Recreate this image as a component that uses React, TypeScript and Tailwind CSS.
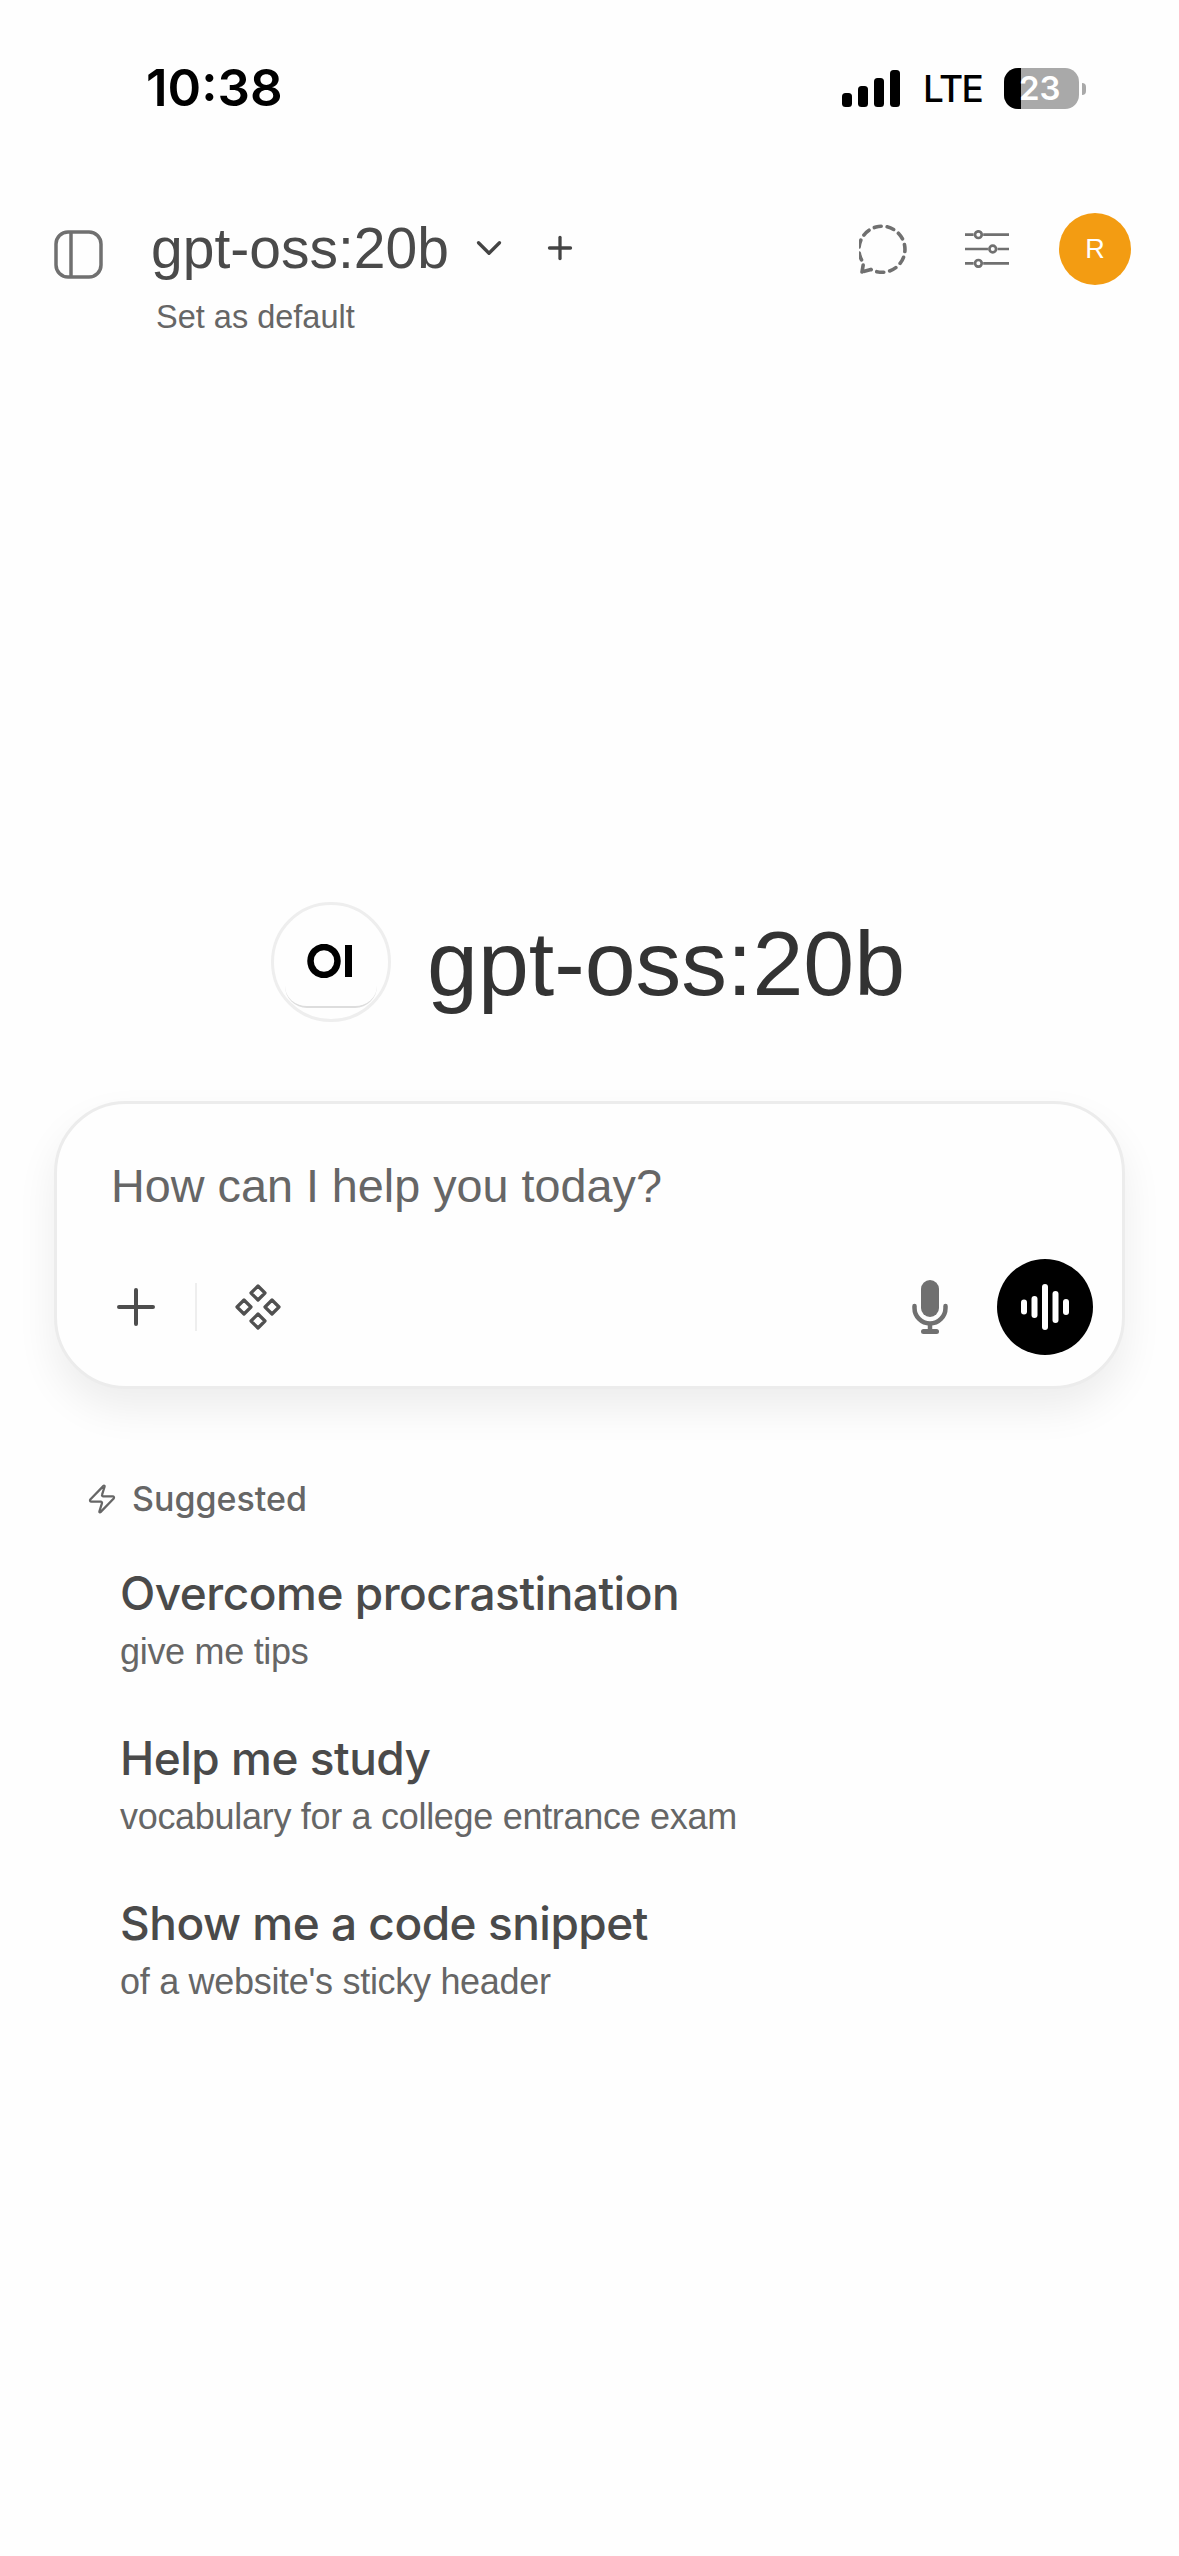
import { Plus, ChevronDown, Zap } from "lucide-react";

const suggestions = [
  { title: "Overcome procrastination", sub: "give me tips" },
  { title: "Help me study", sub: "vocabulary for a college entrance exam" },
  { title: "Show me a code snippet", sub: "of a website's sticky header" },
];

function StatusBar() {
  return (
    <div className="flex h-[213px] items-start justify-between pl-[146px] pr-[93px] pt-[58px]">
      <div className="font-['Inter',sans-serif] text-[51px] font-semibold leading-[60px] text-black">10:38</div>
      <div className="mt-[10px] flex items-center">
        <svg width="60" height="37" viewBox="0 0 58 37" fill="black">
          <rect x="0" y="23" width="10" height="14" rx="3.5" />
          <rect x="16" y="16" width="10" height="21" rx="3.5" />
          <rect x="32" y="8" width="10" height="29" rx="3.5" />
          <rect x="48" y="0" width="10" height="37" rx="3.5" />
        </svg>
        <div className="ml-[22px] w-[60px] font-['Inter',sans-serif] text-[37px] font-medium leading-[38px] tracking-[-1.5px] text-black">LTE</div>
        <div className="relative ml-[21px] h-[41px] w-[75px] overflow-hidden rounded-[14px] bg-[#a9a9a9]">
          <div className="h-full w-[17px] bg-black" />
          <div className="absolute left-[15px] top-0 font-['Inter',sans-serif] text-[33px] font-semibold leading-[41px] text-white">23</div>
        </div>
        <div className="ml-[3px] h-[12px] w-[4px] rounded-r-full bg-[#a9a9a9]" />
      </div>
    </div>
  );
}

function Header() {
  return (
    <div className="flex h-[120px] items-start pl-[54px] pr-[48px] pt-[17px]">
      <svg width="49" height="49" viewBox="0 0 49 49" fill="none" stroke="#707070" strokeWidth="3.5" className="mr-[48px]">
        <rect x="2" y="2" width="45" height="45" rx="12" />
        <path d="M17 2v45" />
      </svg>
      <div className="-mt-[7px]">
        <div className="flex items-center">
          <div className="font-['Liberation_Sans',sans-serif] text-[57px] leading-[50px] text-[#4a4a4a]">gpt-oss:20b</div>
          <ChevronDown className="ml-[19px]" size={42} strokeWidth={1.9} color="#444" />
          <Plus className="ml-[32px]" size={36} strokeWidth={2.2} color="#444" />
        </div>
        <div className="ml-[5px] mt-[26px] font-['Liberation_Sans',sans-serif] text-[32.500px] leading-[36px] text-[#666]">Set as default</div>
      </div>
      <div className="-mt-[17px] ml-auto flex items-center">
        <svg width="50" height="50" viewBox="0 0 50 50" fill="none" stroke="#707070" strokeWidth="3.6" strokeDasharray="7 6" strokeLinecap="round">
          <path d="M3 48l1.5-9A23 23 0 1 1 12 45.500z" />
        </svg>
        <svg width="44" height="38" viewBox="0 0 46 38" fill="none" stroke="#707070" strokeWidth="2.8" className="ml-[56px]">
          <path d="M0 4h9m10 0h27M0 19h24m10 0h12M0 34h9m10 0h27" />
          <circle cx="14" cy="4" r="3.500" />
          <circle cx="29" cy="19" r="3.500" />
          <circle cx="14" cy="34" r="3.500" />
        </svg>
        <div className="ml-[50px] flex h-[72px] w-[72px] items-center justify-center rounded-full bg-[#f39c12] font-['Liberation_Sans',sans-serif] text-[27px] text-white">R</div>
      </div>
    </div>
  );
}

function Hero() {
  return (
    <div className="mt-[569px] flex items-center pl-[271px]">
      <div className="flex h-[120px] w-[120px] items-center justify-center rounded-full border-[3px] border-[#eeeeee]">
        <div className="flex h-[92px] w-[92px] items-center justify-center rounded-[22px] border-b-2 border-[#dddddd] pr-[3px]">
          <svg width="46" height="34" viewBox="0 0 46 34">
            <ellipse cx="17" cy="17" rx="13.500" ry="14" fill="none" stroke="black" strokeWidth="6.500" />
            <rect x="38" y="1" width="7" height="32" fill="black" />
          </svg>
        </div>
      </div>
      <div className="ml-[36px] mt-[2px] font-['Liberation_Sans',sans-serif] text-[91.500px] leading-[100px] text-[#333333]">gpt-oss:20b</div>
    </div>
  );
}

function Composer() {
  return (
    <div className="mx-[54px] mt-[79px] h-[288px] rounded-[72px] border-[3px] border-[#ececec] bg-[#fefefe] shadow-[0_20px_40px_rgba(0,0,0,0.07)]">
      <div className="pl-[54px] pt-[54px] font-['Liberation_Sans',sans-serif] text-[46.750px] leading-[56px] text-[#666666]">How can I help you today?</div>
      <div className="mt-[45px] flex items-center pl-[60px] pr-[29px]">
        <svg width="38" height="38" viewBox="0 0 38 38" stroke="#4d4d4d" strokeWidth="4" strokeLinecap="round">
          <path d="M19 2v34M2 19h34" />
        </svg>
        <div className="ml-[40px] h-[48px] w-[2px] bg-[#eeeeee]" />
        <svg width="48" height="48" viewBox="0 0 48 48" fill="none" stroke="#505050" strokeWidth="3.200" strokeLinejoin="round" className="ml-[37px]">
          <path d="M24 3l7 7-7 7-7-7zM24 31l7 7-7 7-7-7zM10 17l7 7-7 7-7-7zM38 17l7 7-7 7-7-7z" />
        </svg>
        <svg width="36" height="54" viewBox="0 0 36 54" fill="none" className="ml-auto">
          <rect x="9" y="0" width="18" height="37" rx="9" fill="#707070" />
          <path d="M2.500 26v2a15.500 15.500 0 0 0 31 0v-2" stroke="#707070" strokeWidth="4.500" strokeLinecap="round" />
          <path d="M18 44v6" stroke="#707070" strokeWidth="4.500" />
          <rect x="9" y="49" width="18" height="5" rx="2.500" fill="#707070" />
        </svg>
        <div className="ml-[49px] flex h-[96px] w-[96px] items-center justify-center rounded-full bg-black">
          <svg width="48" height="46" viewBox="0 0 48 46" fill="white">
            <rect x="0" y="15.500" width="6" height="15" rx="3" />
            <rect x="10.500" y="12" width="6" height="22" rx="3" />
            <rect x="21" y="0" width="6" height="46" rx="3" />
            <rect x="31.500" y="7" width="6" height="32" rx="3" />
            <rect x="42" y="15" width="6" height="16" rx="3" />
          </svg>
        </div>
      </div>
    </div>
  );
}

function Suggested() {
  return (
    <div className="mt-[88px] pl-[86px]">
      <div className="flex items-center">
        <Zap size={32} strokeWidth={1.7} color="#666666" />
        <div className="ml-[14px] font-['Inter',sans-serif] text-[34px] font-medium leading-[44px] text-[#666666]">Suggested</div>
      </div>
      <div className="mt-[42px] flex flex-col gap-[48px] pl-[34px]">
        {suggestions.map((item) => (
          <div key={item.title}>
            <div className="font-['Inter',sans-serif] text-[46px] font-medium leading-[60px] tracking-[-0.5px] text-[#4a4a4a]">{item.title}</div>
            <div className="mt-[1px] font-['Liberation_Sans',sans-serif] text-[36px] leading-[56px] tracking-[-0.3px] text-[#666666]">{item.sub}</div>
          </div>
        ))}
      </div>
    </div>
  );
}

export default function App() {
  return (
    <div className="min-h-[2556px] w-full overflow-hidden bg-[#fefefe]">
      <StatusBar />
      <Header />
      <Hero />
      <Composer />
      <Suggested />
    </div>
  );
}
